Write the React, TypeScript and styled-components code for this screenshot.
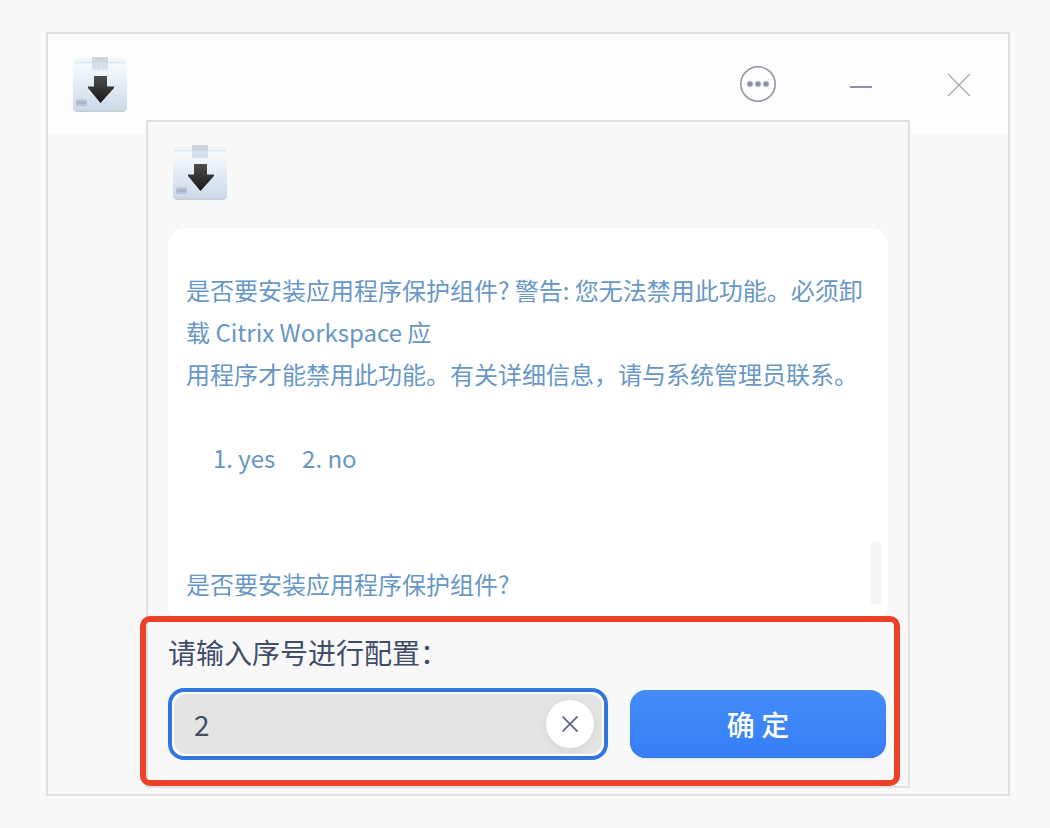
import React, { useId, useRef, useState } from "react";
import styled, { createGlobalStyle } from "styled-components";

const GlobalStyle = createGlobalStyle`
  *, *::before, *::after { box-sizing: border-box; }
  body {
    margin: 0;
    background: #f8f8f8;
    font-family: "Noto Sans CJK SC", "Noto Sans", sans-serif;
    color: #414d68;
  }
  button, input { font: inherit; color: inherit; }
`;

const Page = styled.div`
  padding: 32px 40px 32px 46px;
`;

const Window = styled.main`
  border: 2px solid #dfdfdf;
  background: #f8f8f8;
  padding-bottom: 6px;
`;

const TitleBar = styled.header`
  display: flex;
  align-items: center;
  justify-content: space-between;
  height: 100px;
  padding: 0 31px 0 24px;
  background: #fdfdfd;
`;

const Controls = styled.div<{ $gap: number }>`
  display: flex;
  align-items: center;
  gap: ${(p) => p.$gap}px;
`;

const IconButton = styled.button`
  display: flex;
  width: 36px;
  height: 36px;
  padding: 0;
  border: 0;
  background: none;
`;

const Dialog = styled.section`
  position: relative;
  margin: -14px 98px 0;
  padding: 22px 20px 26px;
  border: 2px solid #dfdfdf;
  background: #f8f8f8;
`;

const DialogHeader = styled.div`
  display: flex;
  padding: 0 4px 28px;
`;

const Panel = styled.div`
  display: flex;
  justify-content: space-between;
  padding: 41px 6px 17px 18px;
  border-radius: 18px;
  background: #fff;
`;

const Message = styled.p`
  flex: 1;
  margin: 0;
  font-size: 24px;
  line-height: 42px;
  color: #6797c6;
  white-space: pre-wrap;
`;

const ScrollThumb = styled.div`
  align-self: flex-end;
  width: 12px;
  height: 64px;
  border-radius: 6px;
  background: #f5f5f5;
`;

const Form = styled.form`
  position: relative;
  padding-top: 10px;
`;

const Highlight = styled.div`
  position: absolute;
  inset: -6px -12px -26px -28px;
  border: 6px solid #eb4127;
  border-radius: 10px;
  pointer-events: none;
`;

const Label = styled.label`
  display: block;
  margin-bottom: 16px;
  font-size: 28px;
  line-height: 40px;
`;

const FieldRow = styled.div`
  display: grid;
  grid-template-columns: 440fr 256fr;
  align-items: center;
  gap: 22px;
  padding-right: 2px;
`;

const Field = styled.div`
  display: flex;
  min-width: 0;
  height: 72px;
  padding: 2px;
  border: 4px solid #3176e0;
  border-radius: 16px;
  background: #fff;
`;

const FieldInner = styled.div`
  display: flex;
  flex: 1;
  align-items: center;
  min-width: 0;
  padding: 0 8px 0 20px;
  border-radius: 12px;
  background: #e4e4e4;
`;

const TextInput = styled.input`
  flex: 1;
  min-width: 0;
  height: 100%;
  padding: 0;
  border: 0;
  outline: 0;
  background: none;
  font-size: 28px;
`;

const ClearButton = styled.button`
  display: flex;
  align-items: center;
  justify-content: center;
  width: 48px;
  height: 48px;
  padding: 0;
  border: 0;
  border-radius: 50%;
  background: #fff;
  box-shadow: 0 2px 8px rgba(0, 0, 0, 0.08);
`;

const ConfirmButton = styled.button`
  height: 68px;
  padding: 0;
  border: 0;
  border-radius: 16px;
  background: linear-gradient(#428cf7, #377ef7);
  box-shadow: inset 0 -1px 0 #3473e4, 0 2px 2px rgba(44, 90, 180, 0.08);
  color: #fff;
  font-size: 28px;
  font-weight: 500;
  line-height: 40px;
`;

function PackageIcon() {
  const id = useId();
  return (
    <svg width="56" height="56" viewBox="0 0 56 56" aria-hidden="true">
      <defs>
        <linearGradient id={id + "b"} x1="0" y1="0" x2="0" y2="1">
          <stop offset="0" stopColor="#f8fcff" />
          <stop offset="1" stopColor="#cbd9e8" />
        </linearGradient>
        <linearGradient id={id + "f"} x1="0" y1="0" x2="0" y2="1">
          <stop offset="0" stopColor="#f5f8fa" />
          <stop offset="1" stopColor="#e9f1f6" />
        </linearGradient>
        <linearGradient id={id + "a"} x1="0" y1="0" x2="0" y2="1">
          <stop offset="0" stopColor="#4d4d4d" />
          <stop offset="1" stopColor="#181818" />
        </linearGradient>
      </defs>
      <path d="M1 10H55V51.500a4.500 4.500 0 0 1-4.500 4.500H5.500A4.500 4.500 0 0 1 1 51.500Z" fill="#c3cad1" />
      <path d="M1 6.500H55V50.500a4 4 0 0 1-4 4H5a4 4 0 0 1-4-4Z" fill={`url(#${id}b)`} />
      <path d="M1 7 3.500 3Q5 1.500 7 1.500H49Q51 1.500 52.500 3L55 7Z" fill={`url(#${id}f)`} />
      <path d="M2 6.200H54V7.600H2Z" fill="#d9e7f1" />
      <path d="M20 1H36V13.500L34.500 15 33 13 31 15 29 13 27 15 25 13 23 15 21.500 13 20 14.500Z" fill="#d3dfea" />
      <path d="M20 1H36V6.500H20Z" fill="#cdd6df" />
      <path d="M22 20H35V30.500H42V32L28.500 47 16 32V30.500H22Z" fill={`url(#${id}a)`} />
      <path d="M4 43.500H15V50H4Z" fill="#b6c5d5" />
      <path d="M5 45.500H14V48H5Z" fill="#a6b6c8" />
    </svg>
  );
}

const PROMPT = `是否要安装应用程序保护组件? 警告: 您无法禁用此功能。必须卸载 Citrix Workspace 应
用程序才能禁用此功能。有关详细信息，请与系统管理员联系。

     1. yes     2. no


是否要安装应用程序保护组件?`;

export default function App() {
  const [value, setValue] = useState("2");
  const input = useRef<HTMLInputElement>(null);

  const clear = () => {
    setValue("");
    input.current?.focus();
  };

  return (
    <>
      <GlobalStyle />
      <Page>
        <Window>
          <TitleBar>
            <PackageIcon />
            <Controls $gap={67}>
              <IconButton type="button" aria-label="菜单">
                <svg width="36" height="36" viewBox="0 0 36 36" fill="none" stroke="#9297a8">
                  <circle cx="18" cy="18" r="17.200" strokeWidth="1.600" />
                  <g fill="#8c90a1" stroke="#c9ccd4" strokeWidth="1">
                    <circle cx="10" cy="18" r="3" />
                    <circle cx="18" cy="18" r="3" />
                    <circle cx="26" cy="18" r="3" />
                  </g>
                </svg>
              </IconButton>
              <Controls $gap={62}>
                <IconButton type="button" aria-label="最小化">
                  <svg width="36" height="36" viewBox="0 0 36 36">
                    <path d="M7 21H29" stroke="#8d90a2" strokeWidth="2" />
                  </svg>
                </IconButton>
                <IconButton type="button" aria-label="关闭">
                  <svg width="36" height="36" viewBox="0 0 36 36">
                    <path d="M7 8 29 30M29 8 7 30" stroke="#a3a6b5" strokeWidth="1.200" />
                  </svg>
                </IconButton>
              </Controls>
            </Controls>
          </TitleBar>

          <Dialog role="dialog" aria-label="配置">
            <DialogHeader>
              <PackageIcon />
            </DialogHeader>
            <Panel>
              <Message>{PROMPT}</Message>
              <ScrollThumb />
            </Panel>
            <Form onSubmit={(e) => e.preventDefault()}>
              <Label htmlFor="choice">请输入序号进行配置：</Label>
              <FieldRow>
                <Field>
                  <FieldInner>
                    <TextInput
                      id="choice"
                      ref={input}
                      value={value}
                      onChange={(e) => setValue(e.target.value)}
                    />
                    <ClearButton type="button" aria-label="清除" onClick={clear}>
                      <svg width="16" height="16" viewBox="0 0 16 16">
                        <path d="M.500.500 15.500 15.500M15.500.500.500 15.500" stroke="#5d677e" strokeWidth="1.800" />
                      </svg>
                    </ClearButton>
                  </FieldInner>
                </Field>
                <ConfirmButton type="submit">确 定</ConfirmButton>
              </FieldRow>
              <Highlight />
            </Form>
          </Dialog>
        </Window>
      </Page>
    </>
  );
}
